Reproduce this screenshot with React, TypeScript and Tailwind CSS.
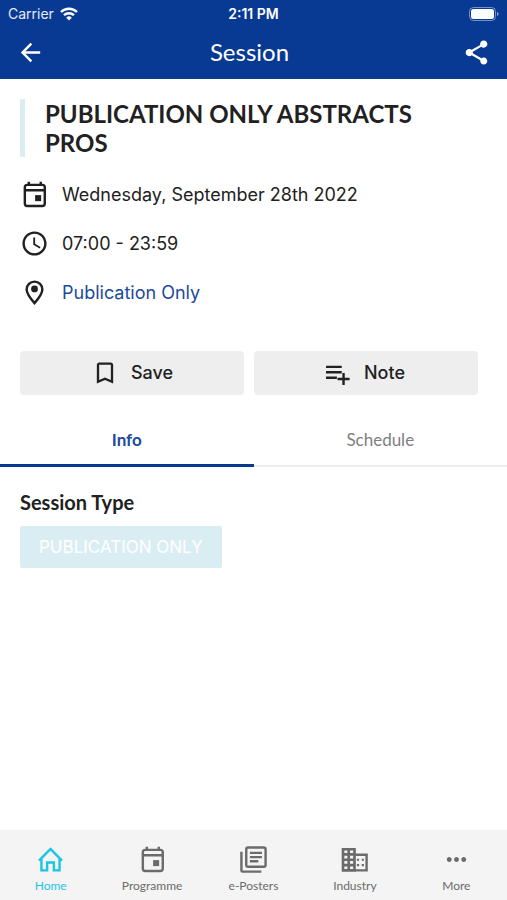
import React, { useState } from 'react';
import { clsx } from 'clsx';
import { MdArrowBack, MdBookmarkBorder, MdMoreHoriz, MdSchedule, MdShare } from 'react-icons/md';

const tabs = ['Info', 'Schedule'];

interface IconProps {
  size?: number;
}

function CalendarIcon({ size = 28 }: IconProps) {
  return (
    <svg viewBox="0 0 24 24" width={size} height={size} fill="none" stroke="currentColor" strokeWidth="2" aria-hidden="true">
      <rect x="4" y="4" width="16.5" height="17.5" rx="2" />
      <path d="M4 8.5h16.5M7.3 1.5V4M17.2 1.5V4" />
      <path d="M12.500 12.500h5v5h-5z" fill="currentColor" stroke="none" />
    </svg>
  );
}

function PinIcon({ size = 29 }: IconProps) {
  return (
    <svg viewBox="0 0 24 24" width={size} height={size} fill="none" stroke="currentColor" strokeWidth="2" aria-hidden="true">
      <path d="M12 3a6.5 6.5 0 0 0-6.5 6.5c0 3 2.6 6.8 6.5 11.3 3.9-4.5 6.5-8.3 6.5-11.3A6.5 6.5 0 0 0 12 3z" />
      <circle cx="12" cy="9" r="2.8" fill="currentColor" stroke="none" />
    </svg>
  );
}

function NoteIcon({ size = 28 }: IconProps) {
  return (
    <svg viewBox="0 0 24 24" width={size} height={size} fill="currentColor" aria-hidden="true">
      <path d="M2.500 14.500h9v2h-9zM2.500 5.500h13v2h-13zM2.500 10h13v2h-13zM16 11.500h2v4h4v2h-4v4h-2v-4h-4v-2h4z" />
    </svg>
  );
}

function HomeIcon({ size = 28 }: IconProps) {
  return (
    <svg viewBox="0 0 24 24" width={size} height={size} fill="none" stroke="currentColor" strokeWidth="2" aria-hidden="true">
      <path d="M2.5 13 12 3.2 21.5 13" />
      <path d="M4.5 11.5V21h4.700v-6.500h5.600V21h4.700v-9.500" />
    </svg>
  );
}

function PostersIcon({ size = 28 }: IconProps) {
  return (
    <svg viewBox="0 0 24 24" width={size} height={size} fill="none" stroke="currentColor" strokeWidth="2" aria-hidden="true">
      <rect x="6" y="2" width="16" height="16" rx="1.5" />
      <path d="M2 5.500V21a1 1 0 0 0 1 1h15.500" />
      <path d="M9 6.500h10M9 10h10M9 13.500h7" />
    </svg>
  );
}

function IndustryIcon({ size = 28 }: IconProps) {
  return (
    <svg viewBox="0 0 24 24" width={size} height={size} fill="none" stroke="currentColor" strokeWidth="2.200" aria-hidden="true">
      <path d="M2.500 3.500H12V21H2.500zM7.200 3.500V21M2.500 7.800H12M2.500 12.200H12M2.500 16.600H12" />
      <path d="M12 8h10v13H12" strokeWidth="2" />
      <path d="M14 12.200h1.800M18 12.200h1.800M14 16.600h1.800M18 16.600h1.800" strokeWidth="1.800" />
    </svg>
  );
}

const navItems = [
  { label: 'Home', icon: HomeIcon },
  { label: 'Programme', icon: CalendarIcon },
  { label: 'e-Posters', icon: PostersIcon },
  { label: 'Industry', icon: IndustryIcon },
  { label: 'More', icon: MdMoreHoriz },
];

function StatusBar() {
  return (
    <div className="grid grid-cols-3 items-center h-7 px-2 text-sm">
      <div className="flex items-center gap-1.5">
        <span className="text-white/90">Carrier</span>
        <svg viewBox="0 0 18 14" width="18" height="14" fill="none" stroke="currentColor" strokeWidth="2.4" aria-hidden="true">
          <path d="M1 5a11.5 11.5 0 0 1 16 0" />
          <path d="M4 8.2a7.2 7.2 0 0 1 10 0" />
          <path d="M9 13.6 6.2 10.7a4 4 0 0 1 5.6 0z" fill="currentColor" stroke="none" />
        </svg>
      </div>
      <span className="text-center font-semibold">2:11 PM</span>
      <svg viewBox="0 0 30 14" width="30" height="14" className="justify-self-end" aria-hidden="true">
        <rect x="0.5" y="0.5" width="26" height="13" rx="4" fill="none" stroke="#fff" strokeOpacity="0.45" />
        <rect x="2" y="2" width="23" height="10" rx="2.5" fill="#fff" />
        <path d="M28 5v4c1-.3 1.6-1.1 1.6-2S29 5.3 28 5z" fill="#fff" fillOpacity="0.5" />
      </svg>
    </div>
  );
}

export default function App() {
  const [tab, setTab] = useState('Info');
  const [page, setPage] = useState('Home');

  return (
    <div className="min-h-screen flex flex-col bg-white text-[#212121] font-['Inter',sans-serif]">
      <header className="bg-[#083a93] text-white">
        <StatusBar />
        <div className="flex items-center h-[51px] px-4 pb-0.5">
          <button aria-label="Back">
            <MdArrowBack size={29} />
          </button>
          <h1 className="flex-1 pr-2 pb-0.5 text-center font-['Lato',sans-serif] text-2xl">Session</h1>
          <button aria-label="Share">
            <MdShare size={29} />
          </button>
        </div>
      </header>

      <main className="flex-1">
        <section className="px-5 pt-5">
          <h2 className="border-l-[5px] border-[#daedf3] pl-5 pr-5 font-['Lato',sans-serif] text-2xl leading-[29px] font-bold">
            PUBLICATION ONLY ABSTRACTS PROS
          </h2>

          <ul className="mt-[23px] space-y-5 text-lg leading-[29px]">
            <li className="flex items-center gap-[13px]">
              <CalendarIcon size={29} />
              <span>Wednesday, September 28th 2022</span>
            </li>
            <li className="flex items-center gap-[13px]">
              <MdSchedule size={29} />
              <span>07:00 - 23:59</span>
            </li>
            <li className="flex items-center gap-[13px]">
              <PinIcon size={29} />
              <a href="#location" className="text-[#1c4a9c]">Publication Only</a>
            </li>
          </ul>
        </section>

        <div className="grid grid-cols-2 gap-2.5 mt-11 pl-5 pr-[29px] text-lg font-medium">
          <button className="flex items-center justify-center gap-3 h-11 rounded bg-[#eeeeee]">
            <MdBookmarkBorder size={28} />
            Save
          </button>
          <button className="flex items-center justify-center gap-3 h-11 pr-1 rounded bg-[#eeeeee]">
            <NoteIcon size={29} />
            Note
          </button>
        </div>

        <div role="tablist" className="grid grid-cols-2 mt-5 font-['Lato',sans-serif]">
          {tabs.map(name => (
            <button
              key={name}
              role="tab"
              aria-selected={tab === name}
              onClick={() => setTab(name)}
              className={clsx(
                'h-[52px] text-[17px]',
                tab === name
                  ? 'border-b-[3px] border-[#083a93] text-[#1c4a9c] font-bold'
                  : 'border-b-2 border-[#eeeeee] text-[#808080]'
              )}
            >
              {name}
            </button>
          ))}
        </div>

        <section className="px-5 pt-5">
          <h3 className="font-['Lato',sans-serif] text-xl leading-[30px] font-bold">Session Type</h3>
          <span className="inline-block mt-[9px] px-[19px] rounded-xs bg-[#daedf3] text-white text-[17px] leading-[42px]">
            PUBLICATION ONLY
          </span>
        </section>
      </main>

      <nav className="grid grid-cols-5 h-[70px] pt-2 bg-[#f4f4f4] font-['Lato',sans-serif] text-xs">
        {navItems.map(({ label, icon: Icon }) => (
          <button
            key={label}
            onClick={() => setPage(label)}
            className={clsx(
              'flex flex-col items-center justify-center gap-1',
              page === label ? 'text-[#1cc4e8]' : 'text-[#6b6b6b]'
            )}
          >
            <Icon size={29} />
            {label}
          </button>
        ))}
      </nav>
    </div>
  );
}
